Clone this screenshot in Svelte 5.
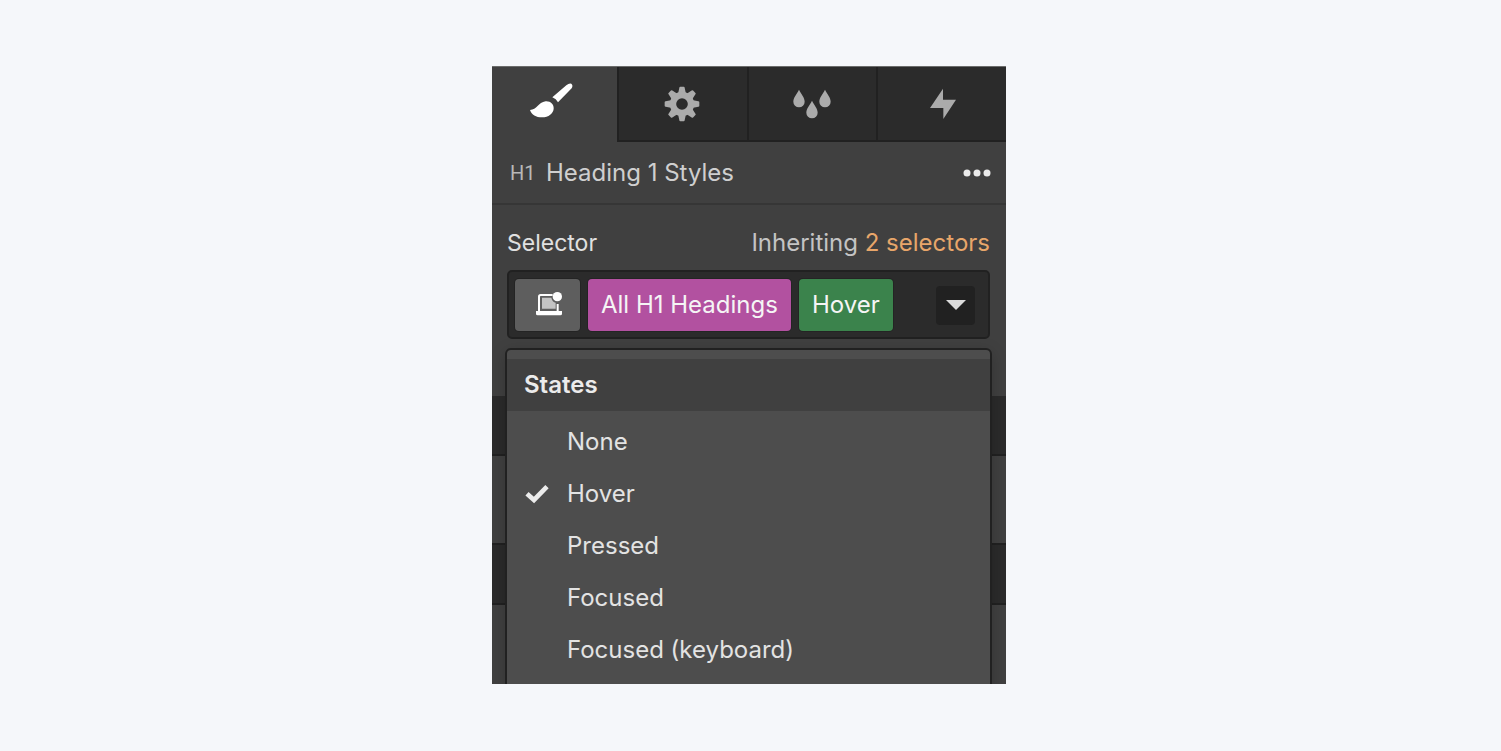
<script lang="ts">
  type Tab = 'style' | 'settings' | 'effects' | 'interactions';

  const tabs: { id: Tab; label: string }[] = [
    { id: 'style', label: 'Style' },
    { id: 'settings', label: 'Settings' },
    { id: 'effects', label: 'Style manager' },
    { id: 'interactions', label: 'Interactions' }
  ];
  const states = ['None', 'Hover', 'Pressed', 'Focused', 'Focused (keyboard)'];
  const gearTeeth = [0, 45, 90, 135, 180, 225, 270, 315];

  let activeTab: Tab = $state('style');
  let selected = $state('Hover');
  let menuOpen = $state(true);
</script>

<main class="page">
  <section class="panel">
    <div class="tabs" role="tablist">
      {#each tabs as tab}
        <button
          class="tab"
          class:active={activeTab === tab.id}
          role="tab"
          aria-selected={activeTab === tab.id}
          aria-label={tab.label}
          onclick={() => (activeTab = tab.id)}
        >
          {#if tab.id === 'style'}
            <svg width="54" height="45" viewBox="130 62 162 135" fill="currentColor">
              <path d="M203 111 L245 75 Q254 67 260 70 Q266 75 261 84 L220 126 Q215 115 203 111Z" />
              <path d="M136 149 C157 149 160 126 183 123 C198 122 208 132 207 145 C206 159 192 171 172 171 C154 171 141 164 136 149Z" />
            </svg>
          {:else if tab.id === 'settings'}
            <svg width="36" height="36" viewBox="-54 -54 108 108" fill="currentColor">
              {#each gearTeeth as angle}
                <path d="M-12 -30 L-8 -49 Q-8 -52 -5 -52 H5 Q8 -52 8 -49 L12 -30Z" transform="rotate({angle})" />
              {/each}
              <circle r="27" fill="none" stroke="currentColor" stroke-width="19" />
            </svg>
          {:else if tab.id === 'effects'}
            <svg width="38" height="30" viewBox="0 0 114 90" fill="currentColor">
              <path d="M18 2 C25 16 35 25 35 38 A17 17 0 0 1 1 38 C1 25 11 16 18 2Z" />
              <path d="M96 2 C103 16 113 25 113 38 A17 17 0 0 1 79 38 C79 25 89 16 96 2Z" />
              <path d="M57 35 C64 49 74 58 74 71 A17 17 0 0 1 40 71 C40 58 50 49 57 35Z" />
            </svg>
          {:else}
            <svg width="32" height="32" viewBox="-12 0 96 96" fill="currentColor">
              <path d="M42 2 V35 H81 L43 93 V60 H3Z" />
            </svg>
          {/if}
        </button>
      {/each}
    </div>

    <header class="heading">
      <span class="tag">H1</span>
      <h1>Heading 1 Styles</h1>
      <button class="more" aria-label="More options">
        <svg width="28" height="8" viewBox="0 0 28 8" fill="currentColor">
          <circle cx="4" cy="4" r="3.5" />
          <circle cx="14" cy="4" r="3.5" />
          <circle cx="24" cy="4" r="3.5" />
        </svg>
      </button>
    </header>

    <div class="selector">
      <div class="selector-label">
        <span class="label">Selector</span>
        <span class="inherit">Inheriting <a href="#selectors">2 selectors</a></span>
      </div>

      <div class="field">
        <button class="chip device" aria-label="Breakpoint">
          <svg width="28" height="26" viewBox="0 0 84 78">
            <path d="M15 58 V14 Q15 9 20 9 H56 M71 36 V58" fill="none" stroke="#fff" stroke-width="6" />
            <path d="M24 17 H52 Q55 30 65 32 V50 H24Z" fill="#c4c4c4" />
            <path d="M6 57 H84 V65 Q84 70 79 70 H11 Q6 70 6 65Z" fill="#fff" />
            <circle cx="70" cy="14" r="14" fill="#fff" />
          </svg>
        </button>
        <button class="chip tag-chip">All H1 Headings</button>
        <button class="chip state-chip">{selected}</button>
        <button
          class="toggle"
          aria-label="States"
          aria-expanded={menuOpen}
          onclick={() => (menuOpen = !menuOpen)}
        >
          <svg width="20" height="10" viewBox="0 0 20 10" fill="#dcdcdc">
            <path d="M0 0 H20 L10 10Z" />
          </svg>
        </button>

        {#if menuOpen}
          <div class="menu">
            <h2>States</h2>
            <div class="items" role="menu">
              {#each states as state}
                <button
                  class="item"
                  role="menuitemradio"
                  aria-checked={state === selected}
                  onclick={() => (selected = state)}
                >
                  <span class="check">
                    {#if state === selected}
                      <svg width="24" height="20" viewBox="0 0 72 60">
                        <path d="M6 29 L27 48 L66 8" fill="none" stroke="#ececec" stroke-width="14" />
                      </svg>
                    {/if}
                  </span>
                  {state}
                </button>
              {/each}
            </div>
          </div>
        {/if}
      </div>
    </div>

    <div class="bar"></div>
    <div class="group"></div>
    <div class="bar second"></div>
    <div class="group last"></div>
  </section>
</main>

<style>
  :global(body) {
    background: #f5f7fa;
  }

  .page {
    display: flex;
    justify-content: center;
    padding: 66px 25px 66px 22px;
    font-family: Inter, 'Liberation Sans', sans-serif;
    font-size: 24px;
    line-height: 32px;
    color: #d9d9d9;
  }

  .panel {
    box-sizing: border-box;
    width: 100%;
    max-width: 514px;
    overflow: hidden;
    background: #404040;
    border-top: 1px solid #6b6c6b;
  }

  button {
    margin: 0;
    padding: 0;
    border: 0;
    background: none;
    color: inherit;
    font: inherit;
    cursor: pointer;
  }

  svg {
    display: block;
  }

  .tabs {
    display: grid;
    grid-template-columns: 125fr 130fr 129fr 130fr;
  }

  .tab {
    display: flex;
    align-items: center;
    justify-content: center;
    height: 75px;
    padding-bottom: 2px;
    background: #2b2b2b;
    box-shadow: inset 2px -2px #212121;
    color: #ababab;
  }

  .tab.active {
    background: #404040;
    box-shadow: none;
    color: #fff;
  }

  .heading {
    display: flex;
    align-items: center;
    height: 61px;
    padding: 0 15px 0 18px;
    border-bottom: 2px solid #363636;
  }

  .tag {
    width: 36px;
    font-family: Roboto, sans-serif;
    font-size: 20px;
    color: #b8b8b8;
  }

  h1 {
    flex: 1;
    margin: 0;
    font-size: 24px;
    font-weight: 400;
    color: #cfcfcf;
  }

  .more {
    color: #ebebeb;
  }

  .selector {
    padding: 22px 16px 57px 15px;
  }

  .selector-label {
    display: flex;
    justify-content: space-between;
    margin-bottom: 11px;
    color: #e0e0e0;
  }

  .label {
    font-size: 23px;
  }

  .inherit {
    color: #c4c4c4;
  }

  .inherit a {
    color: #e8a66a;
    text-decoration: none;
  }

  .field {
    position: relative;
    display: flex;
    align-items: center;
    gap: 8px;
    padding: 7px 13px 6px 6px;
    border: 2px solid #212121;
    border-radius: 5px;
    background: #2b2b2b;
  }

  .chip {
    height: 52px;
    padding: 0 13px;
    border-radius: 4px;
    color: #f5f5f5;
    box-shadow: 0 0 0 1px #242424;
  }

  .device {
    display: flex;
    align-items: center;
    justify-content: center;
    width: 65px;
    background: #5e5e5e;
  }

  .tag-chip {
    background: #b251a0;
  }

  .state-chip {
    background: #3b834c;
  }

  .toggle {
    display: flex;
    align-items: center;
    justify-content: center;
    width: 39px;
    height: 39px;
    margin-left: auto;
    border-radius: 4px;
    background: #212121;
  }

  .menu {
    position: absolute;
    top: calc(100% + 11px);
    left: -4px;
    right: -4px;
    padding: 9px 0 16px;
    border: 2px solid #212121;
    border-radius: 6px;
    background: #4d4d4d;
    box-shadow: 0 4px 16px rgba(0, 0, 0, 0.2);
  }

  h2 {
    margin: 0;
    padding: 10px 17px;
    background: #404040;
    font-size: 24px;
    font-weight: 600;
    color: #ebebeb;
  }

  .items {
    padding-top: 5px;
  }

  .item {
    display: flex;
    align-items: center;
    width: 100%;
    height: 52px;
    padding: 0 18px;
    text-align: left;
    color: #e3e3e3;
  }

  .check {
    width: 42px;
  }

  .bar {
    height: 58px;
    border-bottom: 2px solid #212121;
    background: #2b2b2b;
  }

  .second {
    border-top: 2px solid #212121;
  }

  .group {
    height: 87px;
  }

  .last {
    height: 79px;
  }
</style>
